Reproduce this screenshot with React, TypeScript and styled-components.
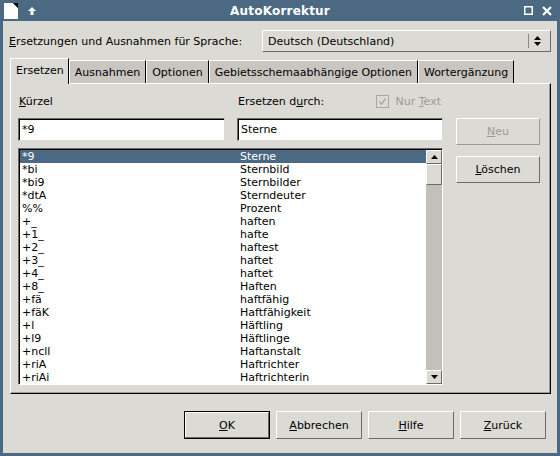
import styled, { createGlobalStyle } from "styled-components";

const GlobalStyle = createGlobalStyle`
  html, body { margin: 0; padding: 0; }
  body {
    font-family: "DejaVu Sans", "Noto Sans", sans-serif;
    font-size: 11px;
    color: #000;
  }
`;

const Window = styled.div`
  width: 560px;
  height: 456px;
  box-sizing: border-box;
  background: #4b6983;
  padding: 0 3px 3px 3px;
  display: flex;
  flex-direction: column;
`;

const TitleBar = styled.div`
  height: 21px;
  display: grid;
  grid-template-columns: 1fr auto 1fr;
  align-items: center;
  color: #fff;
`;

const TitleLeft = styled.div`
  display: flex;
  align-items: center;
  gap: 10px;
  padding-left: 1px;
`;

const IconSlot = styled.span<{ $w: number; $h: number }>`
  flex: none;
  width: ${(p) => p.$w}px;
  height: ${(p) => p.$h}px;
  display: flex;

  svg { width: 100%; height: 100%; display: block; }
`;

const TitleRight = styled.div`
  display: flex;
  align-items: center;
  justify-content: flex-end;
  gap: 9px;
  padding-right: 5px;
`;

const TitleText = styled.div`
  font-weight: bold;
  font-size: 12px;
  letter-spacing: 0.2px;
`;

const Client = styled.div`
  flex: 1;
  background: #dcdad5;
  display: flex;
  flex-direction: column;
  padding: 9px 6px 0 7px;
`;

const LangRow = styled.div`
  height: 22px;
  display: flex;
  align-items: center;
  justify-content: space-between;
`;

const LangLabel = styled.span`
  margin-left: -1px;
`;

const Combo = styled.div`
  width: 289px;
  height: 22px;
  box-sizing: border-box;
  border: 1px solid;
  border-color: #fff #6e6b67 #6e6b67 #fff;
  display: flex;
  align-items: center;
  padding-left: 5px;
`;

const ComboText = styled.span`
  flex: 1;
`;

const Spinner = styled.div`
  width: 16px;
  height: 14px;
  border-left: 1px solid #8a8783;
  display: flex;
  align-items: center;
  justify-content: center;
  margin-right: 5px;
`;

const SpinArrows = styled.div`
  display: flex;
  flex-direction: column;
  gap: 2px;
`;

const TabStrip = styled.div`
  margin-top: 6px;
  height: 25px;
  display: flex;
  align-items: flex-end;
  position: relative;
  z-index: 1;
`;

const Tab = styled.div<{ $active?: boolean }>`
  box-sizing: border-box;
  height: ${(p) => (p.$active ? "26px" : "23px")};
  margin-bottom: ${(p) => (p.$active ? "-1px" : "0")};
  padding: ${(p) => (p.$active ? "0 4px 2px 5px" : "0 5px 0 5px")};
  background: ${(p) => (p.$active ? "#dcdad5" : "#c9c6c1")};
  border-top: 1px solid #fff;
  border-left: 1px solid #fff;
  border-right: 1px solid #000;
  display: flex;
  align-items: center;
  white-space: nowrap;
`;

const Panel = styled.div`
  border: 1px solid;
  border-color: #fff #000 #000 #fff;
  box-shadow: inset -1px -1px 0 #9d9a95;
  display: flex;
  padding: 9px 11px 8px 7px;
`;

const LeftCol = styled.div`
  width: 425px;
  display: flex;
  flex-direction: column;
`;

const RightCol = styled.div`
  width: 84px;
  margin-left: 13px;
  padding-top: 25px;
  display: flex;
  flex-direction: column;
  gap: 11px;
`;

const FieldLabels = styled.div`
  height: 16px;
  display: grid;
  grid-template-columns: 219px 1fr;
  align-items: center;
`;

const LabelCell = styled.div`
  display: flex;
  align-items: center;
  justify-content: space-between;
  padding-left: 1px;
`;

const CheckGroup = styled.div`
  display: flex;
  align-items: center;
  gap: 7px;
  color: #9d9a95;
  padding-right: 2px;
`;

const CheckBox = styled.div`
  width: 13px;
  height: 13px;
  box-sizing: border-box;
  border: 1px solid #aaa7a2;
  background: #dcdad5;
  display: flex;
  align-items: center;
  justify-content: center;
`;

const InputRow = styled.div`
  margin-top: 9px;
  display: grid;
  grid-template-columns: 207px 206px;
  gap: 12px;
`;

const TextField = styled.div`
  height: 23px;
  box-sizing: border-box;
  background: #fff;
  border: 1px solid;
  border-color: #6e6b67 #dcdad5 #dcdad5 #6e6b67;
  box-shadow: inset 1px 1px 0 #000;
  display: flex;
  align-items: center;
  padding-left: 3px;
`;

const ListBox = styled.div`
  margin-top: 7px;
  height: 237px;
  box-sizing: border-box;
  border: 1px solid;
  border-color: #6e6b67 #fff #fff #6e6b67;
  box-shadow: inset 1px 1px 0 #000;
  background: #fff;
  display: flex;
  padding: 1px 0 0 1px;
  overflow: hidden;
`;

const Rows = styled.div`
  flex: 1;
  display: flex;
  flex-direction: column;
`;

const Row = styled.div<{ $selected?: boolean }>`
  height: 13px;
  line-height: 13px;
  flex: none;
  display: grid;
  grid-template-columns: 218px 1fr;
  padding-left: 2px;
  background: ${(p) => (p.$selected ? "#4b6983" : "transparent")};
  color: ${(p) => (p.$selected ? "#fff" : "#000")};
  white-space: nowrap;
`;

const ScrollBar = styled.div`
  width: 16px;
  background: #c3c0bb;
  display: flex;
  flex-direction: column;
`;

const ScrollButton = styled.div<{ $h: number }>`
  height: ${(p) => p.$h}px;
  box-sizing: border-box;
  background: #dcdad5;
  border: 1px solid;
  border-color: #fff #6e6b67 #6e6b67 #fff;
  display: flex;
  align-items: center;
  justify-content: center;
`;

const Trough = styled.div`
  flex: 1;
`;

const PushButton = styled.div<{ $disabled?: boolean; $w: number; $h: number }>`
  width: ${(p) => p.$w}px;
  height: ${(p) => p.$h}px;
  box-sizing: border-box;
  border: 1px solid;
  border-color: ${(p) =>
    p.$disabled ? "#fff #9d9a95 #9d9a95 #fff" : "#fff #6e6b67 #6e6b67 #fff"};
  color: ${(p) => (p.$disabled ? "#9d9a95" : "#000")};
  display: flex;
  align-items: center;
  justify-content: center;
`;

const ButtonBar = styled.div`
  margin-top: 17px;
  margin-right: 5px;
  display: flex;
  justify-content: flex-end;
  gap: 6px;
`;

const DefaultFrame = styled.div`
  border: 1px solid #000;
  display: flex;
`;

const U = styled.span`
  text-decoration: underline;
`;

const entries: [string, string][] = [
  ["*9", "Sterne"],
  ["*bi", "Sternbild"],
  ["*bi9", "Sternbilder"],
  ["*dtA", "Sterndeuter"],
  ["%%", "Prozent"],
  ["+_", "haften"],
  ["+1_", "hafte"],
  ["+2_", "haftest"],
  ["+3_", "haftet"],
  ["+4_", "haftet"],
  ["+8_", "Haften"],
  ["+fä", "haftfähig"],
  ["+fäK", "Haftfähigkeit"],
  ["+l", "Häftling"],
  ["+l9", "Häftlinge"],
  ["+ncll", "Haftanstalt"],
  ["+riA", "Haftrichter"],
  ["+riAi", "Haftrichterin"],
];

const tabs = ["Ersetzen", "Ausnahmen", "Optionen", "Gebietsschemaabhängige Optionen", "Wortergänzung"];

// white sheet with the black folded corner, as in the title bar
const DocIcon = () => (
  <IconSlot $w={14} $h={16}>
    <svg viewBox="0 0 14 16">
      <polygon points="0,0 9,0 14,5 14,16 0,16" fill="#ffffff" />
      <polygon points="9,0 14,0 14,5" fill="#000000" />
    </svg>
  </IconSlot>
);

const UpIcon = () => (
  <IconSlot $w={8} $h={8}>
    <svg viewBox="0 0 8 8">
      <polygon points="4,0 8,4 5.5,4 5.5,8 2.5,8 2.5,4 0,4" fill="#fff" />
    </svg>
  </IconSlot>
);

const MaxIcon = () => (
  <svg width="9" height="9" viewBox="0 0 9 9">
    <rect x="0.75" y="0.75" width="7.5" height="7.5" fill="none" stroke="#fff" strokeWidth="1.5" />
  </svg>
);

const CloseIcon = () => (
  <svg width="10" height="10" viewBox="0 0 10 10">
    <path d="M1 1 L9 9 M9 1 L1 9" stroke="#fff" strokeWidth="2.2" />
  </svg>
);

const Arrow = ({ down }: { down?: boolean }) => (
  <svg width="7" height="4" viewBox="0 0 7 4">
    <polygon points={down ? "0,0 7,0 3.5,4" : "0,4 7,4 3.5,0"} fill="#000" />
  </svg>
);

const Check = () => (
  <svg width="9" height="9" viewBox="0 0 9 9">
    <path d="M1.5 4.5 L3.5 7 L7.5 1.5" fill="none" stroke="#9d9a95" strokeWidth="1.2" />
  </svg>
);

export default function App() {
  return (
    <>
      <GlobalStyle />
      <Window>
        <TitleBar>
          <TitleLeft>
            <DocIcon />
            <UpIcon />
          </TitleLeft>
          <TitleText>AutoKorrektur</TitleText>
          <TitleRight>
            <MaxIcon />
            <CloseIcon />
          </TitleRight>
        </TitleBar>
        <Client>
          <LangRow>
            <LangLabel>
              <U>E</U>rsetzungen und Ausnahmen für Sprache:
            </LangLabel>
            <Combo>
              <ComboText>Deutsch (Deutschland)</ComboText>
              <Spinner>
                <SpinArrows>
                  <Arrow />
                  <Arrow down />
                </SpinArrows>
              </Spinner>
            </Combo>
          </LangRow>

          <TabStrip>
            {tabs.map((t, i) => (
              <Tab key={t} $active={i === 0}>
                {t}
              </Tab>
            ))}
          </TabStrip>

          <Panel>
            <LeftCol>
              <FieldLabels>
                <LabelCell>
                  <span>
                    <U>K</U>ürzel
                  </span>
                </LabelCell>
                <LabelCell>
                  <span>
                    Ersetzen d<U>u</U>rch:
                  </span>
                  <CheckGroup>
                    <CheckBox>
                      <Check />
                    </CheckBox>
                    <span>
                      Nur <U>T</U>ext
                    </span>
                  </CheckGroup>
                </LabelCell>
              </FieldLabels>
              <InputRow>
                <TextField>*9</TextField>
                <TextField>Sterne</TextField>
              </InputRow>
              <ListBox>
                <Rows>
                  {entries.map(([k, v], i) => (
                    <Row key={k} $selected={i === 0}>
                      <span>{k}</span>
                      <span>{v}</span>
                    </Row>
                  ))}
                </Rows>
                <ScrollBar>
                  <ScrollButton $h={14}>
                    <Arrow />
                  </ScrollButton>
                  <ScrollButton $h={21} />
                  <Trough />
                  <ScrollButton $h={14}>
                    <Arrow down />
                  </ScrollButton>
                </ScrollBar>
              </ListBox>
            </LeftCol>
            <RightCol>
              <PushButton $disabled $w={84} $h={27}>
                <span>
                  <U>N</U>eu
                </span>
              </PushButton>
              <PushButton $w={84} $h={27}>
                <span>
                  <U>L</U>öschen
                </span>
              </PushButton>
            </RightCol>
          </Panel>

          <ButtonBar>
            <DefaultFrame>
              <PushButton $w={84} $h={26}>
                <span>
                  <U>O</U>K
                </span>
              </PushButton>
            </DefaultFrame>
            <PushButton $w={86} $h={28}>
              <span>
                <U>A</U>bbrechen
              </span>
            </PushButton>
            <PushButton $w={86} $h={28}>
              <span>
                <U>H</U>ilfe
              </span>
            </PushButton>
            <PushButton $w={86} $h={28}>
              <span>
                <U>Z</U>urück
              </span>
            </PushButton>
          </ButtonBar>
        </Client>
      </Window>
    </>
  );
}
